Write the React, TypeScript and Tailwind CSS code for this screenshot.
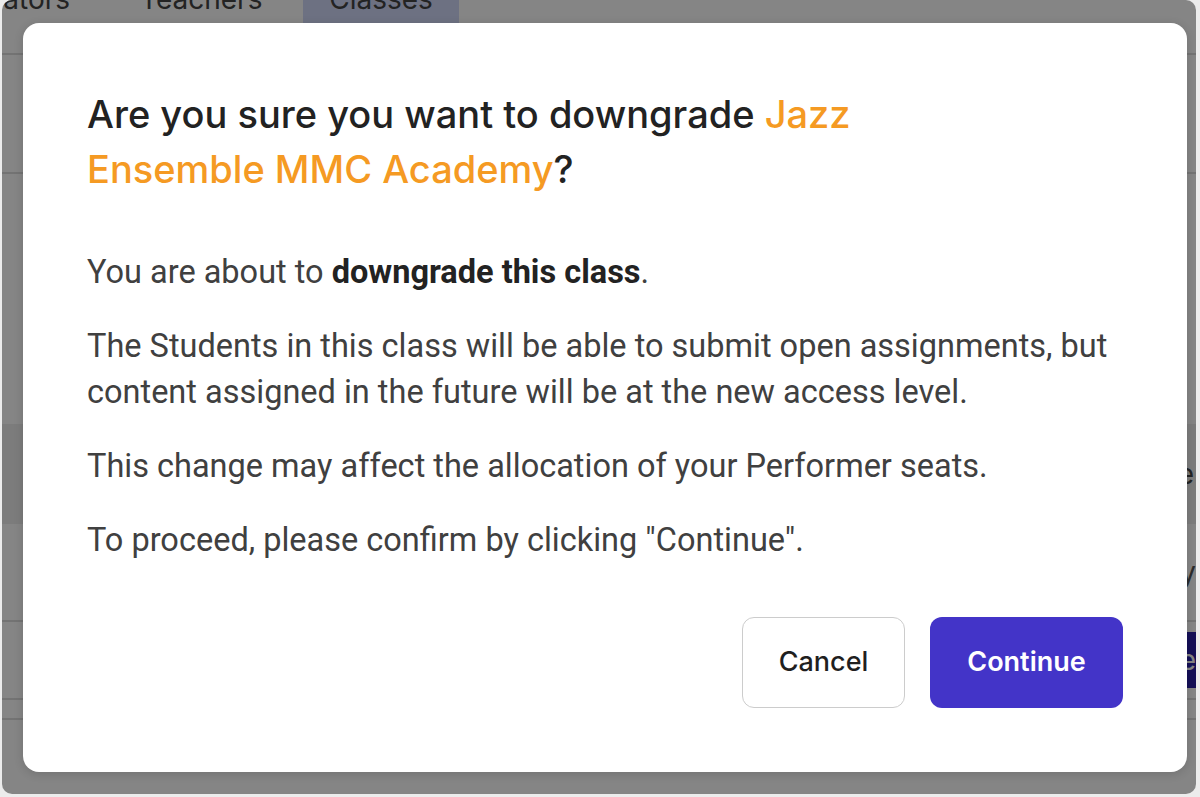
import React from "react";

const DowngradeDialog: React.FC = () => {
  return (
    <div className="w-[1164px] h-[749px] bg-white rounded-[16px] shadow-[0_2px_10px_rgba(0,0,0,0.15)] px-[64px] pt-[64px] flex flex-col">
      <h2 className="text-[38px] leading-[55px] font-medium text-[#222222] max-w-[800px]">
        Are you sure you want to downgrade{" "}
        <span className="text-[#f59a23]">Jazz Ensemble MMC Academy</span>?
      </h2>

      <div
        className="mt-[52px] flex flex-col gap-[28px] text-[32.5px] leading-[46px] text-[#404040]"
        style={{ fontFamily: "Roboto, 'Noto Sans', sans-serif" }}
      >
        <p>
          You are about to{" "}
          <strong className="font-bold text-[#222222]">downgrade this class</strong>.
        </p>
        <p>
          The Students in this class will be able to submit open assignments, but content assigned in the
          future will be at the new access level.
        </p>
        <p>This change may affect the allocation of your Performer seats.</p>
        <p>To proceed, please confirm by clicking "Continue".</p>
      </div>

      <div className="mt-[54px] flex justify-end gap-[25px]">
        <button
          type="button"
          className="w-[163px] h-[91px] rounded-[12px] border border-[#cccccc] bg-white text-[27px] font-medium text-[#1f1f1f]"
        >
          Cancel
        </button>
        <button
          type="button"
          className="w-[193px] h-[91px] rounded-[12px] bg-[#4334c8] text-[27px] font-semibold text-white"
        >
          Continue
        </button>
      </div>
    </div>
  );
};

export default function App() {
  return (
    <div
      className="w-[1200px] h-[797px] bg-[#ececec] pl-[2px] pr-[4px] pb-[3px] overflow-hidden"
      style={{ fontFamily: "Inter, 'Noto Sans', sans-serif" }}
    >
      <div className="relative h-full rounded-[10px] overflow-hidden bg-white">
        {/* Page behind the dialog */}
        <div className="flex flex-col text-[28px] text-[#444444]">
          <div className="h-[55px] flex items-start border-b-2 border-[#dddddd]">
            <div className="w-[301px] shrink-0 flex items-start -mt-[16px]">
              <span className="w-[68px] leading-[30px] flex justify-end overflow-visible whitespace-nowrap">
                <span className="-ml-[80px]">Educators</span>
              </span>
              <span className="ml-[70px] leading-[30px]">Teachers</span>
            </div>
            <div className="w-[156px] h-full flex items-start justify-center bg-[#d2d9fa]">
              <span className="leading-[30px] -mt-[16px]">Classes</span>
            </div>
          </div>
          <div className="h-[119px] border-b-2 border-[#dddddd]" />
          <div className="h-[250px]" />
          <div className="h-[100px] bg-[#eeeeee] flex items-center justify-end pr-[2px]">
            <span>e</span>
          </div>
          <div className="h-[98px] border-b-2 border-[#dddddd] flex items-center justify-end">
            <span className="text-[#555555]">y</span>
          </div>
          <div className="h-[78px] border-b-2 border-[#dddddd] flex items-center justify-end">
            <div className="h-[56px] w-[40px] bg-[#2a1fa8] text-white flex items-center justify-end pr-[2px] -mr-[2px]">
              e
            </div>
          </div>
          <div className="h-[20px] border-b-2 border-[#dddddd]" />
        </div>

        {/* Overlay */}
        <div className="absolute inset-0 bg-black/[0.48] pl-[21px] pt-[23px]">
          <DowngradeDialog />
        </div>
      </div>
    </div>
  );
}
